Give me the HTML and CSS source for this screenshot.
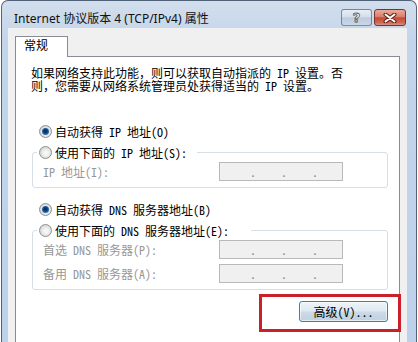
FILE: index.html
```html
<!DOCTYPE html>
<html lang="zh-CN">
<head>
  <meta charset="UTF-8">
  <meta name="viewport" content="width=device-width, initial-scale=1.0">
  <title>Internet 协议版本 4 (TCP/IPv4) 属性</title>
  <link rel="stylesheet" href="styles.css">
</head>
<body>
  <div class="window">
    <div class="titlebar">
      <span class="title">Internet 协议版本 4 (TCP/IPv4) 属性</span>
      <div class="caption-btns">
        <span class="cap-btn help">?</span>
        <span class="cap-btn close">
          <svg width="14" height="10" viewBox="0 0 14 10">
            <path d="M2.5 1.5 L11.5 8.5 M11.5 1.5 L2.5 8.5" stroke="#5b2118" stroke-width="4" stroke-linecap="round"/>
            <path d="M2.5 1.5 L11.5 8.5 M11.5 1.5 L2.5 8.5" stroke="#fff" stroke-width="2" stroke-linecap="round"/>
          </svg>
        </span>
      </div>
    </div>

    <div class="frame">
      <div class="client">
        <div class="tabs">
          <span class="tab active">常规</span>
        </div>

        <div class="panel">
          <p class="description">如果网络支持此功能，则可以获取自动指派的 IP 设置。否<br>则，您需要从网络系统管理员处获得适当的 IP 设置。</p>

          <div class="option first">
            <span class="radio checked"></span>
            <span>自动获得 IP 地址(O)</span>
          </div>

          <fieldset class="group">
            <legend class="legend-ip">
              <span class="option">
                <span class="radio"></span>
                <span>使用下面的 IP 地址(S):</span>
              </span>
            </legend>
            <div class="field">
              <span class="label">IP 地址(I):</span>
              <span class="ip"><span>.</span><span>.</span><span>.</span></span>
            </div>
          </fieldset>

          <div class="option after-group">
            <span class="radio checked"></span>
            <span>自动获得 DNS 服务器地址(B)</span>
          </div>

          <fieldset class="group">
            <legend class="legend-dns">
              <span class="option">
                <span class="radio"></span>
                <span>使用下面的 DNS 服务器地址(E):</span>
              </span>
            </legend>
            <div class="field">
              <span class="label">首选 DNS 服务器(P):</span>
              <span class="ip"><span>.</span><span>.</span><span>.</span></span>
            </div>
            <div class="field">
              <span class="label">备用 DNS 服务器(A):</span>
              <span class="ip"><span>.</span><span>.</span><span>.</span></span>
            </div>
          </fieldset>

          <div class="actions">
            <button class="btn default">高级(V)...</button>
          </div>
        </div>
      </div>
    </div>
  </div>

  <!-- annotation around the advanced button -->
  <div class="highlight"></div>
</body>
</html>
```

FILE: styles.css
```css
* {
  box-sizing: border-box;
}

body {
  margin: 0;
  background-color: #fff;
  font-family: "Noto Sans Mono CJK SC", "Noto Sans CJK SC", sans-serif;
  font-size: 12px;
  color: #000;
}

.window {
  margin-left: 1px;
  width: 416px;
  height: 342px;
  overflow: hidden;
  border: 1px solid rgba(45, 60, 80, 0.75);
  border-bottom: none;
  border-radius: 7px 7px 0 0;
  background: linear-gradient(to bottom, #d2deed, #c3d5ea 40px, #bdd1ea);
}

/* title bar */
.titlebar {
  display: flex;
  align-items: flex-start;
  height: 27px;
  padding: 8px 10px 0 12px;
}

.title {
  margin-top: 2px;
  font-family: "Noto Sans", "Noto Sans CJK SC", sans-serif;
  font-size: 12px;
  line-height: 16px;
  color: #111;
  white-space: nowrap;
}

.caption-btns {
  margin-left: auto;
  display: flex;
  gap: 2px;
}

.cap-btn {
  display: flex;
  align-items: center;
  justify-content: center;
  height: 17px;
  border-radius: 3px;
}

.help {
  width: 31px;
  border: 1px solid rgba(60, 80, 110, 0.6);
  background: linear-gradient(to bottom, #e6edf6, #d4dfec 45%, #bccbde 52%, #cad7e7);
  font-family: "DejaVu Sans", sans-serif;
  font-weight: bold;
  font-size: 13px;
  line-height: 15px;
  color: #fff;
  -webkit-text-stroke: 0.8px #4a5668;
}

.close {
  width: 32px;
  border: 1px solid #7a3328;
  background: linear-gradient(to bottom, #eaaa9b, #d9806c 45%, #c54a34 52%, #cf6a55 85%, #dd9482);
}

/* dialog body */
.frame {
  padding: 0 9px 0 6px;
}

.client {
  background-color: #f0f0f0;
  padding: 8px 7px 0;
  height: 320px;
}

.tabs {
  display: flex;
  align-items: flex-end;
}

.tab {
  position: relative;
  z-index: 1;
  width: 53px;
  height: 21px;
  margin-bottom: -1px;
  padding-left: 8px;
  border: 1px solid #898c95;
  border-bottom: none;
  background-color: #fff;
  font-family: "Noto Sans CJK SC", sans-serif;
  line-height: 16px;
}

.panel {
  height: 300px;
  border: 1px solid #898c95;
  background-color: #fff;
  padding: 9px 12px 0 15px;
}

.description {
  margin: 0;
  line-height: 13px;
  white-space: nowrap;
}

.option {
  display: flex;
  align-items: center;
  gap: 3px;
  height: 16px;
  white-space: nowrap;
}

.first {
  margin-top: 31px;
  padding-left: 8px;
}

.after-group {
  margin-top: 13px;
  padding-left: 8px;
}

.radio {
  position: relative;
  flex: none;
  width: 13px;
  height: 13px;
  border-radius: 50%;
  border: 1px solid #8f9090;
  background: radial-gradient(circle at 55% 55%, #f6f6f6 20%, #e2e2e2 55%, #cdcdcd 85%, #e9e9e9);
}

.radio.checked::after {
  content: "";
  position: absolute;
  top: 2px;
  left: 2px;
  width: 7px;
  height: 7px;
  border-radius: 50%;
  background: radial-gradient(circle at 50% 45%, #0b2a4f 0, #123e72 35%, #2d78bd 70%, #7cc0ee 100%);
}

/* group boxes */
.group {
  margin: 5px 0 0 1px;
  width: 356px;
  min-width: 0;
  padding: 2px 0 6px 4px;
  border: 1px solid #d5dfe5;
  border-radius: 3px;
}

.group legend {
  padding: 0 0 0 2px;
}

.legend-ip {
  width: 160px;
}

.legend-dns {
  width: 214px;
}

.field {
  display: flex;
  align-items: center;
  height: 19px;
  padding-left: 6px;
}

.field + .field {
  margin-top: 5px;
}

.label {
  width: 176px;
  color: #979797;
  white-space: nowrap;
}

.ip {
  display: flex;
  width: 124px;
  height: 19px;
  padding-left: 5px;
  border: 1px solid #b9b9b9;
  background-color: #f0f0f0;
  color: #8a8a8a;
  line-height: 17px;
}

.ip span {
  width: 31px;
  text-align: right;
}

/* buttons */
.actions {
  display: flex;
  justify-content: flex-end;
  width: 356px;
  margin: 11px 0 0 1px;
}

.btn {
  width: 89px;
  height: 21px;
  padding: 0;
  border: 1px solid #3c7fb1;
  border-radius: 3px;
  background: linear-gradient(to bottom, #edf4f9, #dfe9f1 48%, #cbdbe7 52%, #bfd1df);
  box-shadow: inset 0 0 0 1px rgba(255, 255, 255, 0.6);
  font-family: inherit;
  font-size: 12px;
  color: #000;
}

.highlight {
  position: absolute;
  left: 259px;
  top: 294px;
  width: 142px;
  height: 38px;
  border: 3px solid #c9202a;
}
```
